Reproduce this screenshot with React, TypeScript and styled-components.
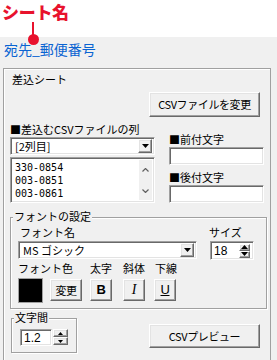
import React from "react";
import styled, { createGlobalStyle, css } from "styled-components";

const Global = createGlobalStyle`
  html, body { margin: 0; padding: 0; background: #f0f0f0; }
  body { font-family: "Noto Sans CJK JP", "Noto Sans", sans-serif; }
`;

const sunken = css`
  box-sizing: border-box;
  background: #fff;
  border: 1px solid;
  border-color: #a0a0a0 #fff #fff #a0a0a0;
  box-shadow: inset 1px 1px 0 #696969, inset -1px -1px 0 #e3e3e3;
`;

const raised = css`
  box-sizing: border-box;
  background: #f0f0f0;
  border: 1px solid;
  border-color: #fff #696969 #696969 #fff;
  box-shadow: inset -1px -1px 0 #a0a0a0, inset 1px 1px 0 #e3e3e3;
`;

const Root = styled.div`
  position: relative;
  width: 277px;
  height: 360px;
  overflow: hidden;
  background: #f0f0f0;
  font-family: "Noto Sans CJK JP", "Noto Sans", sans-serif;
  font-size: 11px;
  color: #000;
`;

const TitleArea = styled.div`
  height: 37px;
  background: #fff;
  padding: 2px 0 0 2px;
  box-sizing: border-box;
`;

const Title = styled.div`
  color: #e8122d;
  font-weight: 900;
  font-size: 17px;
  line-height: 20px;
  letter-spacing: -0.3px;
  white-space: nowrap;
`;

const PointerLine = styled.div`
  position: absolute;
  left: 32px;
  top: 22px;
  width: 2px;
  height: 15px;
  background: #e8122d;
`;

const PointerDot = styled.div`
  position: absolute;
  left: 28px;
  top: 34px;
  width: 11px;
  height: 11px;
  border-radius: 50%;
  background: #e8122d;
`;

const SheetBar = styled.div`
  height: 30px;
  padding-left: 4px;
  box-sizing: border-box;
  font-size: 14px;
  line-height: 25px;
  color: #0a64d2;
`;

const Panel = styled.div`
  margin: 1px 0 0 3px;
  width: 268px;
  height: 292px;
  box-sizing: border-box;
  border: 1px solid #a0a0a0;
  border-bottom: none;
  box-shadow: inset 1px 1px 0 #fff;
  padding-top: 4px;
  display: flex;
  flex-direction: column;
`;

const PanelTitle = styled.div`
  margin-left: 8px;
  line-height: 13px;
`;

const Row = styled.div<{ $mt?: number }>`
  display: flex;
  align-items: flex-start;
  margin-top: ${(p) => p.$mt ?? 0}px;
`;

const Button = styled.button<{ $w: number; $h: number; $ml?: number; $mt?: number }>`
  ${raised};
  width: ${(p) => p.$w}px;
  height: ${(p) => p.$h}px;
  margin: ${(p) => p.$mt ?? 0}px 0 0 ${(p) => p.$ml ?? 0}px;
  padding: 0;
  font-family: "Noto Sans CJK JP", sans-serif;
  font-size: 11px;
  color: #000;
  letter-spacing: -0.4px;
  display: flex;
  align-items: center;
  justify-content: center;
  line-height: 13px;
`;

const RightButton = styled(Button)`
  margin-left: auto;
  margin-right: 10px;
`;

const Column = styled.div<{ $w: number; $ml: number; $pt?: number }>`
  width: ${(p) => p.$w}px;
  margin-left: ${(p) => p.$ml}px;
  padding-top: ${(p) => p.$pt ?? 0}px;
  display: flex;
  flex-direction: column;
`;

const Label = styled.div<{ $mt?: number; $ml?: number }>`
  line-height: 13px;
  white-space: nowrap;
  margin-top: ${(p) => p.$mt ?? 0}px;
  margin-left: ${(p) => p.$ml ?? 0}px;
`;

const Combo = styled.div<{ $w: number; $mt?: number }>`
  ${sunken};
  width: ${(p) => p.$w}px;
  height: 18px;
  margin-top: ${(p) => p.$mt ?? 0}px;
  padding: 2px;
  display: flex;
  align-items: center;
`;

const ComboText = styled.span`
  flex: 1;
  padding-left: 2px;
  line-height: 14px;
  font-size: 11px;
  white-space: nowrap;
`;

const DropButton = styled.div`
  ${raised};
  width: 14px;
  height: 14px;
  display: flex;
  align-items: center;
  justify-content: center;
`;

const ListBox = styled.div`
  ${sunken};
  width: 145px;
  height: 46px;
  margin-top: 2px;
  padding: 2px;
  display: flex;
`;

const ListItems = styled.div`
  flex: 1;
  padding: 1px 0 0 2px;
  font-family: "DejaVu Sans Mono", "Liberation Mono", monospace;
  font-size: 10px;
  line-height: 13px;
`;

const ScrollStrip = styled.div`
  width: 13px;
  background: #f0f0f0;
  display: flex;
  flex-direction: column;
  align-items: center;
  justify-content: space-between;
  padding: 8px 0 7px;
  box-sizing: border-box;
`;

const TextBox = styled.div<{ $w: number; $h: number; $mt?: number }>`
  ${sunken};
  width: ${(p) => p.$w}px;
  height: ${(p) => p.$h}px;
  margin-top: ${(p) => p.$mt ?? 0}px;
  padding: 1px 3px;
  display: flex;
  align-items: center;
  font-family: "Liberation Sans", "Noto Sans", sans-serif;
  font-size: 12px;
`;

const Group = styled.div<{ $w: number; $h: number; $ml: number; $mt: number; $pad: string }>`
  position: relative;
  box-sizing: border-box;
  width: ${(p) => p.$w}px;
  height: ${(p) => p.$h}px;
  margin: ${(p) => p.$mt}px 0 0 ${(p) => p.$ml}px;
  padding: ${(p) => p.$pad};
  border: 1px solid #a0a0a0;
  box-shadow: inset 1px 1px 0 #fff, 1px 1px 0 #fff;
`;

const Legend = styled.span`
  position: absolute;
  top: -8px;
  left: 2px;
  padding: 0 1px;
  background: #f0f0f0;
  line-height: 13px;
  white-space: nowrap;
`;

const Swatch = styled.div`
  width: 25px;
  height: 25px;
  background: #000;
  box-sizing: border-box;
  border: 1px solid #a0a0a0;
`;

const StyleGlyph = styled.span<{ $kind: "b" | "i" | "u" }>`
  font-family: ${(p) => (p.$kind === "i" ? `"Liberation Serif", serif` : `"Liberation Sans", sans-serif`)};
  font-weight: ${(p) => (p.$kind === "b" ? 700 : 400)};
  font-style: ${(p) => (p.$kind === "i" ? "italic" : "normal")};
  text-decoration: ${(p) => (p.$kind === "u" ? "underline" : "none")};
  font-size: ${(p) => (p.$kind === "i" ? 14 : 13)}px;
  line-height: 14px;
`;

const SpinBox = styled.div`
  ${sunken};
  width: 44px;
  height: 19px;
  margin: 2px 0 0 1px;
  padding: 2px;
  display: flex;
  align-items: center;
  font-family: "Liberation Sans", sans-serif;
  font-size: 12px;
`;

const SpinText = styled.span`
  flex: 1;
  padding-left: 1px;
`;

const SpinArrows = styled.div`
  display: flex;
  flex-direction: column;
  margin-right: 1px;
`;

const SpinHalf = styled.div<{ $h: number; $w: number }>`
  ${raised};
  width: ${(p) => p.$w}px;
  height: ${(p) => p.$h}px;
  display: flex;
  align-items: center;
  justify-content: center;
`;

const Inline = styled.div<{ $gap?: number; $mt?: number }>`
  display: flex;
  align-items: flex-start;
  gap: ${(p) => p.$gap ?? 0}px;
  margin-top: ${(p) => p.$mt ?? 0}px;
`;

const Tri = ({ up, w = 7, h = 4 }: { up?: boolean; w?: number; h?: number }) => (
  <svg width={w} height={h} viewBox={`0 0 ${w} ${h}`}>
    <polygon points={up ? `0,${h} ${w / 2},0 ${w},${h}` : `0,0 ${w},0 ${w / 2},${h}`} fill="#000" />
  </svg>
);

const Chevron = ({ up }: { up?: boolean }) => (
  <svg width="7" height="4" viewBox="0 0 7 4">
    <polyline
      points={up ? "0.5,3.5 3.5,0.5 6.5,3.5" : "0.5,0.5 3.5,3.5 6.5,0.5"}
      fill="none"
      stroke="#606060"
      strokeWidth="1.2"
    />
  </svg>
);

export default function App() {
  return (
    <Root>
      <Global />
      <TitleArea>
        <Title>シート名</Title>
      </TitleArea>
      <PointerLine />
      <PointerDot />
      <SheetBar>宛先_郵便番号</SheetBar>
      <Panel>
        <PanelTitle>差込シート</PanelTitle>
        <Row $mt={6}>
          <RightButton $w={111} $h={25}>CSVファイルを変更</RightButton>
        </Row>
        <Row $mt={6}>
          <Column $w={145} $ml={6}>
            <Label>■差込むCSVファイルの列</Label>
            <Combo $w={145} $mt={1}>
              <ComboText>[2列目]</ComboText>
              <DropButton>
                <Tri />
              </DropButton>
            </Combo>
            <ListBox>
              <ListItems>
                <div>330-0854</div>
                <div>003-0851</div>
                <div>003-0861</div>
              </ListItems>
              <ScrollStrip>
                <Chevron up />
                <Chevron />
              </ScrollStrip>
            </ListBox>
          </Column>
          <Column $w={95} $ml={14} $pt={10}>
            <Label>■前付文字</Label>
            <TextBox $w={95} $h={18} $mt={1} />
            <Label $mt={6}>■後付文字</Label>
            <TextBox $w={95} $h={18} $mt={1} />
          </Column>
        </Row>
        <Group $w={257} $h={92} $ml={6} $mt={14} $pad="8px 0 0 7px">
          <Legend>フォントの設定</Legend>
          <Inline>
            <Column $w={179} $ml={0}>
              <Label $ml={2}>フォント名</Label>
              <Combo $w={179} $mt={2}>
                <ComboText>MS ゴシック</ComboText>
                <DropButton>
                  <Tri />
                </DropButton>
              </Combo>
            </Column>
            <Column $w={46} $ml={12}>
              <Label>サイズ</Label>
              <SpinBox>
                <SpinText>18</SpinText>
                <SpinArrows>
                  <SpinHalf $w={11} $h={7}>
                    <Tri up w={7} h={4} />
                  </SpinHalf>
                  <SpinHalf $w={11} $h={7}>
                    <Tri w={7} h={4} />
                  </SpinHalf>
                </SpinArrows>
              </SpinBox>
            </Column>
          </Inline>
          <Inline $mt={2}>
            <Column $w={72} $ml={0}>
              <Label>フォント色</Label>
              <Inline $gap={7} $mt={3}>
                <Swatch />
                <Button $w={32} $h={22} $mt={1}>
                  変更
                </Button>
              </Inline>
            </Column>
            <Column $w={33} $ml={0}>
              <Label>太字</Label>
              <Button $w={22} $h={22} $mt={4}>
                <StyleGlyph $kind="b">B</StyleGlyph>
              </Button>
            </Column>
            <Column $w={31} $ml={0}>
              <Label>斜体</Label>
              <Button $w={22} $h={22} $mt={4}>
                <StyleGlyph $kind="i">I</StyleGlyph>
              </Button>
            </Column>
            <Column $w={30} $ml={0}>
              <Label $ml={1}>下線</Label>
              <Button $w={22} $h={22} $mt={4}>
                <StyleGlyph $kind="u">U</StyleGlyph>
              </Button>
            </Column>
          </Inline>
        </Group>
        <Row>
          <Group $w={66} $h={35} $ml={7} $mt={9} $pad="10px 0 0 8px">
            <Legend>文字間</Legend>
            <Inline $gap={1}>
              <TextBox $w={32} $h={17}>1.2</TextBox>
              <SpinArrows>
                <SpinHalf $w={15} $h={8}>
                  <Tri up w={5} h={3} />
                </SpinHalf>
                <SpinHalf $w={15} $h={8}>
                  <Tri w={5} h={3} />
                </SpinHalf>
              </SpinArrows>
            </Inline>
          </Group>
          <RightButton $w={111} $h={24} $mt={15}>
            CSVプレビュー
          </RightButton>
        </Row>
      </Panel>
    </Root>
  );
}
